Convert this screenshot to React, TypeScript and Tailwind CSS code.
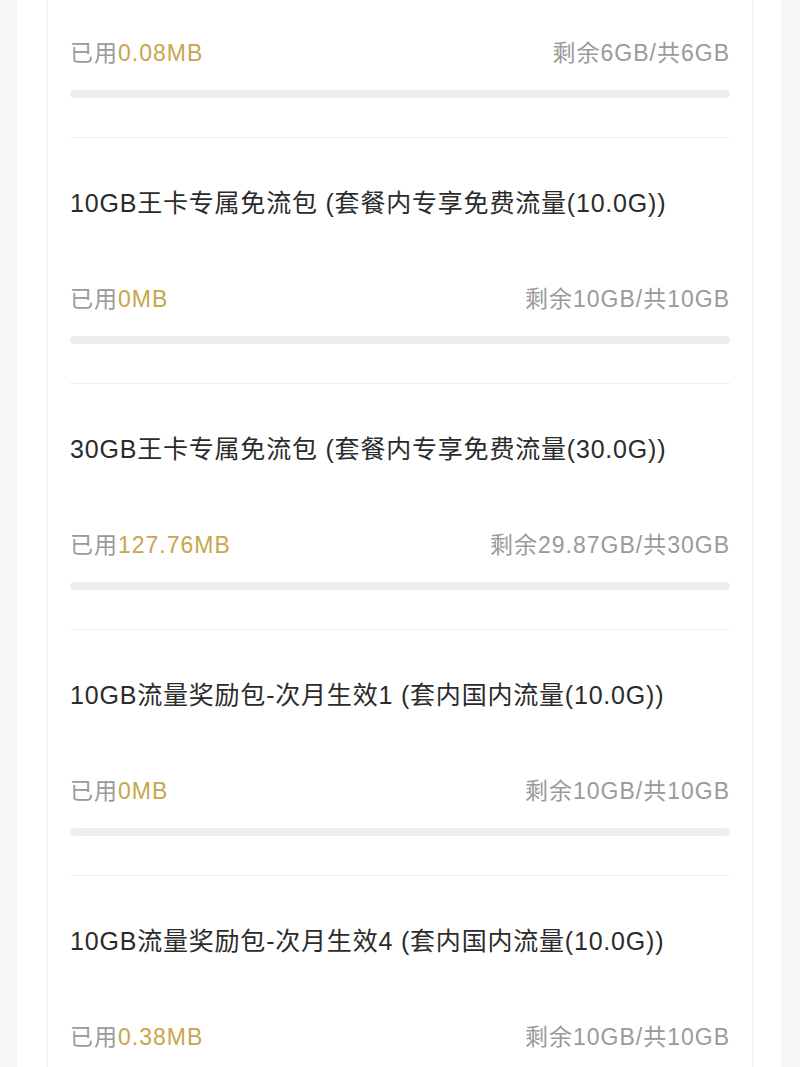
const FONT = { fontFamily: '"Liberation Sans", "Noto Sans CJK SC", sans-serif' }

const ITEMS = [
  { title: '', used: '0.08MB', left: '剩余6GB/共6GB' },
  { title: '10GB王卡专属免流包 (套餐内专享免费流量(10.0G))', used: '0MB', left: '剩余10GB/共10GB' },
  { title: '30GB王卡专属免流包 (套餐内专享免费流量(30.0G))', used: '127.76MB', left: '剩余29.87GB/共30GB' },
  { title: '10GB流量奖励包-次月生效1 (套内国内流量(10.0G))', used: '0MB', left: '剩余10GB/共10GB' },
  { title: '10GB流量奖励包-次月生效4 (套内国内流量(10.0G))', used: '0.38MB', left: '剩余10GB/共10GB' },
]

function Item({ title, used, left, first }: { title: string; used: string; left: string; first?: boolean }) {
  return (
    <div className="border-b border-[#eeeeee]">
      {first ? (
        <div className="h-[23px]" />
      ) : (
        <div className="h-[131px] flex items-center text-[25px] tracking-[0.8px] text-[#2b2b2b] whitespace-nowrap">{title}</div>
      )}
      <div className="h-[61px] flex items-center justify-between text-[23px] tracking-[1px] text-[#9a9a9a]">
        <span>
          已用<span className="font-medium text-[#c8a64a]">{used}</span>
        </span>
        <span>{left}</span>
      </div>
      <div className="mt-[6px] h-[8px] rounded-full bg-[#eeeeee]" />
      <div className="h-[39px]" />
    </div>
  )
}

export default function App() {
  return (
    <div className="w-[800px] h-[1067px] overflow-hidden bg-[#f6f6f6] pl-[17px] pr-[19px]" style={FONT}>
      <div className="h-full bg-white pl-[30px] pr-[28px]">
        <div className="h-full border-x border-[#f1f1f1] px-[22px]">
          {ITEMS.map((it, i) => (
            <Item key={i} {...it} first={i === 0} />
          ))}
        </div>
      </div>
    </div>
  )
}
